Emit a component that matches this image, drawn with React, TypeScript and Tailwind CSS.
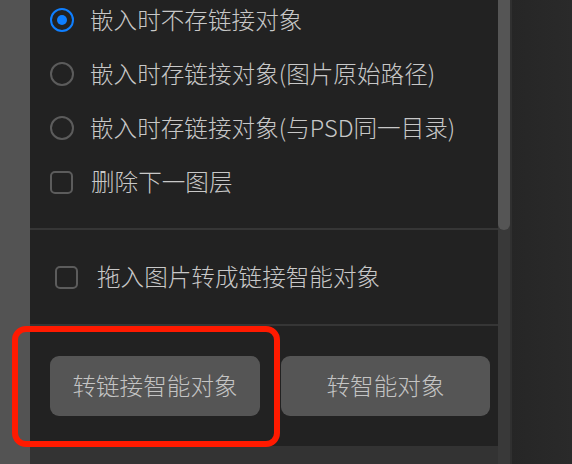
const font = { fontFamily: '"Noto Sans CJK SC", "Noto Sans", sans-serif' };

function Radio({ checked }: { checked?: boolean }) {
  if (checked) {
    return (
      <span className="w-[24px] h-[24px] rounded-full border-[2.5px] border-[#0f7fff] flex items-center justify-center shrink-0">
        <span className="w-[10px] h-[10px] rounded-full bg-[#0f7fff]" />
      </span>
    );
  }
  return <span className="w-[24px] h-[24px] rounded-full border-2 border-[#5c5c5c] shrink-0" />;
}

function Checkbox() {
  return <span className="w-[23px] h-[23px] rounded-[5px] border-2 border-[#5c5c5c] shrink-0" />;
}

const options = [
  { label: '嵌入时不存链接对象', checked: true },
  { label: '嵌入时存链接对象(图片原始路径)' },
  { label: '嵌入时存链接对象(与PSD同一目录)' },
];

export default function App() {
  return (
    <div
      className="relative w-[572px] h-[464px] flex overflow-hidden text-[23.6px] font-light text-[#c8c8c8] leading-none"
      style={font}
    >
      <div className="w-[30px] bg-[#535353]" />

      <div className="w-[468px] flex flex-col">
        <div className="h-[446px] bg-[#222222] flex flex-col overflow-hidden">
          {/* options */}
          <div className="-mt-[7px] pb-[19px] pl-[20px]">
            {options.map((o) => (
              <div key={o.label} className="h-[54px] flex items-center gap-[16px]">
                <Radio checked={o.checked} />
                <span>{o.label}</span>
              </div>
            ))}
            <div className="h-[54px] flex items-center gap-[18px]">
              <Checkbox />
              <span>删除下一图层</span>
            </div>
          </div>
          <div className="h-[2px] bg-[#363636]" />

          <div className="h-[94px] flex items-center gap-[19px] pl-[25px]">
            <Checkbox />
            <span>拖入图片转成链接智能对象</span>
          </div>
          <div className="h-[2px] bg-[#363636]" />

          <div className="h-[120px] flex items-center gap-[21px] pl-[20px]">
            <button className="w-[210px] h-[60px] rounded-[9px] bg-[#555555] text-[#c4c4c4]">
              转链接智能对象
            </button>
            <button className="w-[209px] h-[60px] rounded-[9px] bg-[#555555] text-[#c4c4c4]">
              转智能对象
            </button>
          </div>
        </div>
        <div className="flex-1 bg-[#333333]" />
      </div>

      {/* scrollbar */}
      <div className="w-[12px] bg-[#393939] flex flex-col">
        <div className="h-[230px] bg-[#555555] rounded-b-[6px]" />
      </div>
      <div className="w-[2px] bg-[#303030]" />
      <div className="flex-1 bg-gradient-to-r from-[#262626] to-[#2a2a2a]" />

      {/* annotation */}
      <div className="absolute left-[12px] top-[326px] w-[268px] h-[121px] border-[6px] border-[#ff1a00] rounded-[14px]" />
    </div>
  );
}
